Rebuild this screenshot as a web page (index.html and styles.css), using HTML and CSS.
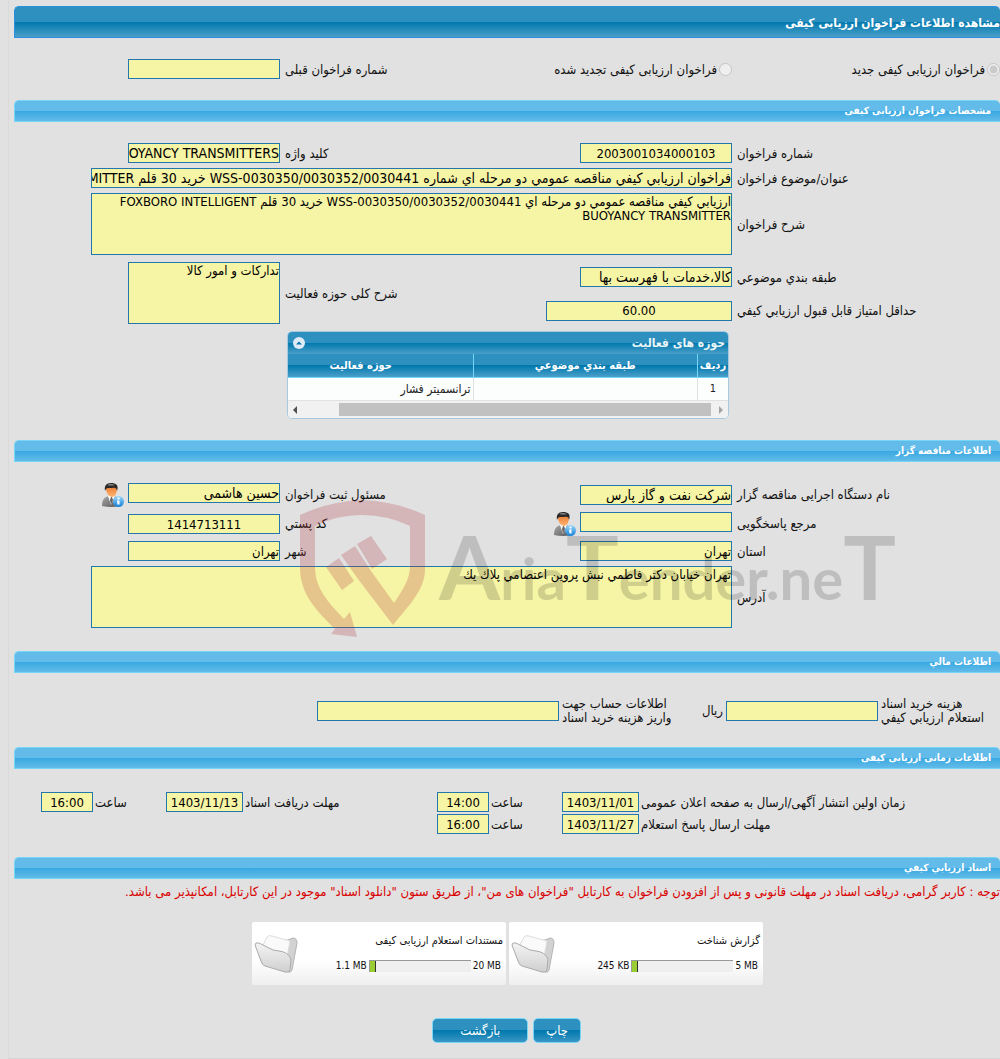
FILE: index.html
```html
<!DOCTYPE html>
<html lang="fa" dir="rtl">
<head>
<meta charset="utf-8">
<meta name="viewport" content="width=device-width, initial-scale=1">
<title>مشاهده اطلاعات فراخوان ارزیابی کیفی</title>
<link rel="stylesheet" href="styles.css">
</head>
<body>
<svg class="sprite" aria-hidden="true">
  <defs>
    <linearGradient id="skin" x1="0" y1="0" x2="0" y2="1"><stop offset="0" stop-color="#e8762a"/><stop offset="1" stop-color="#ffb673"/></linearGradient>
    <linearGradient id="suit" x1="0" y1="0" x2="1" y2="1"><stop offset="0" stop-color="#a9a9a9"/><stop offset="1" stop-color="#555"/></linearGradient>
    <linearGradient id="info" x1="0" y1="0" x2="0" y2="1"><stop offset="0" stop-color="#9ad8fb"/><stop offset="1" stop-color="#1580d8"/></linearGradient>
    <linearGradient id="flap" x1="0" y1="0" x2="0" y2="1"><stop offset="0" stop-color="#f4f4f4"/><stop offset="1" stop-color="#cfcfcf"/></linearGradient>
    <symbol id="user" viewBox="0 0 22 24">
      <path d="M0 23C0 17 2 14 7 13h5c4 1 6 4 6 10Q9 25 0 23z" fill="url(#suit)"/>
      <path d="M6 13l3 9 4-9z" fill="#fff"/>
      <path d="M9 14l-1 3 1 5 2-5-1-3z" fill="#666"/>
      <path d="M4 5c0-3 11-3 11 0 0 5-2 9-5 9S4 10 4 5z" fill="url(#skin)"/>
      <path d="M3 8C2 3 4 0 9 0s8 2 6 8c0-3-2-4-5-3-3 0-6-1-7 3z" fill="#292929"/>
      <path d="M5 2q4-2 8 0-4 1-8 0z" fill="#888"/>
      <circle cx="16.500" cy="18.500" r="5.500" fill="url(#info)"/>
      <path d="M15.500 14.500h2v2h-2zM15 17.500h2.500v4h-2z" fill="#fff"/>
    </symbol>
    <symbol id="folder" viewBox="0 0 44 42">
      <path d="M10 10l24-3 5-2q4 0 4 5l-5 27q-1 3-4 2z" fill="#d2d2d2" stroke="#b5b5b5"/>
      <path d="M9 12l4-8q1-2 5-1l18 5-3 16-5 10z" fill="#fafafa" stroke="#ddd"/>
      <path d="M1 12q0-3 4-2l8 4q6 4 12 4 9 1 12 8l-1 11q-1 3-5 2L11 33q-3-1-4-5z" fill="url(#flap)" stroke="#aaa"/>
    </symbol>
  </defs>
</svg>

<main class="page">
  <h1 class="title">مشاهده اطلاعات فراخوان ارزیابی کیفی</h1>

  <div class="form kind">
    <label class="choice"><input type="radio" name="kind" checked disabled>فراخوان ارزیابی کیفی جدید</label>
    <label class="choice"><input type="radio" name="kind" disabled>فراخوان ارزیابی کیفی تجدید شده</label>
    <label for="prev">شماره فراخوان قبلی</label>
    <input id="prev" class="field" type="text" readonly>
  </div>

  <section>
    <h2 class="bar">مشخصات فراخوان ارزیابی کیفی</h2>
    <div class="form spec">
      <label for="num">شماره فراخوان</label>
      <input id="num" class="field center" type="text" value="2003001034000103" readonly>
      <label for="key">کلید واژه</label>
      <input id="key" class="field" type="text" value="FOXBORO INTELLIGENT BUOYANCY TRANSMITTERS" readonly>

      <label for="subject">عنوان/موضوع فراخوان</label>
      <input id="subject" class="field wide" type="text" value="فراخوان ارزيابي كيفي مناقصه عمومي دو مرحله اي شماره WSS-0030350/0030352/0030441 خريد 30 قلم FOXBORO INTELLIGENT BUOYANCY TRANSMITTER" readonly>

      <label for="desc">شرح فراخوان</label>
      <textarea id="desc" class="field area wide" readonly>ارزيابي كيفي مناقصه عمومي دو مرحله اي WSS-0030350/0030352/0030441 خريد 30 قلم FOXBORO INTELLIGENT BUOYANCY TRANSMITTER</textarea>
    </div>
    <div class="form class">
      <label for="cat">طبقه بندي موضوعي</label>
      <input id="cat" class="field" type="text" value="کالا،خدمات با فهرست بها" readonly>
      <label for="scope" class="tall">شرح کلی حوزه فعالیت</label>
      <textarea id="scope" class="field area tall" readonly>تدارکات و امور کالا</textarea>
      <label for="score">حداقل امتیاز قابل قبول ارزيابي كيفي</label>
      <input id="score" class="field medium center" type="text" value="60.00" readonly>
    </div>

    <div class="grid-box">
      <div class="grid-title">
        <span>حوزه های فعالیت</span>
        <button class="collapse" type="button" aria-label="جمع کردن"><svg viewBox="0 0 12 12"><path d="M3 7.500L6 4.500l3 3z"/></svg></button>
      </div>
      <div class="grid-view">
        <table>
          <colgroup><col class="c-row"><col><col></colgroup>
          <thead><tr><th>رديف</th><th>طبقه بندي موضوعي</th><th>حوزه فعاليت</th></tr></thead>
          <tbody><tr><td class="center">1</td><td></td><td>ترانسميتر فشار</td></tr></tbody>
        </table>
      </div>
      <div class="scroll"><i class="arrow right"></i><i class="thumb"></i><i class="arrow left"></i></div>
    </div>
  </section>

  <section class="owner">
    <h2 class="bar">اطلاعات مناقصه گزار</h2>
    <div class="form org">
      <label for="org">نام دستگاه اجرایی مناقصه گزار</label>
      <input id="org" class="field low" type="text" value="شرکت نفت و گاز پارس" readonly>
      <label for="person">مسئول ثبت فراخوان</label>
      <div class="with-icon high"><input id="person" class="field" type="text" value="حسین هاشمی" readonly><svg class="user"><use href="#user"/></svg></div>

      <label for="ref">مرجع پاسخگویی</label>
      <div class="with-icon high"><input id="ref" class="field" type="text" readonly><svg class="user"><use href="#user"/></svg></div>
      <label for="zip">کد پستي</label>
      <input id="zip" class="field center low" type="text" value="1414713111" readonly>

      <label for="state">استان</label>
      <input id="state" class="field small" type="text" value="تهران" readonly>
      <label for="city">شهر</label>
      <input id="city" class="field small" type="text" value="تهران" readonly>
    </div>
    <div class="form address">
      <label for="addr">آدرس</label>
      <textarea id="addr" class="field area wide" readonly>تهران خيابان دكتر فاطمي نبش پروين اعتصامي پلاك يك</textarea>
    </div>
    <svg class="watermark" viewBox="300 498 604 142" aria-hidden="true">
      <g fill="#b3323a" opacity=".24">
        <path d="M300 515Q330 501 362 500q33 1 63 15v54c0 20-14 34-32 56l-35-46-17-24 14-9 16 25 23 32c8-12 16-24 16-36v-41q-23-11-48-11t-47 11v41c0 22 14 36 29 52l6-7 7 25-26-3 4-5c-18-18-35-34-35-62z"/>
        <path d="M357 544l14-8 16 23-15 10zM326 567l13-9 15 23-12 9z"/>
      </g>
      <text x="439" y="600" direction="ltr"><tspan class="cap">A</tspan>ria<tspan class="cap">T</tspan>ender.ne<tspan class="cap">T</tspan></text>
    </svg>
  </section>

  <section>
    <h2 class="bar">اطلاعات مالي</h2>
    <div class="money">
      <label for="cost">هزینه خرید اسناد<br>استعلام ارزيابي كيفي</label>
      <input id="cost" class="field" type="text" readonly>
      <span>ریال</span>
      <label for="acct">اطلاعات حساب جهت<br>واریز هزینه خرید اسناد</label>
      <input id="acct" class="field" type="text" readonly>
    </div>
  </section>

  <section>
    <h2 class="bar">اطلاعات زمانی ارزیابی کیفی</h2>
    <div class="times">
      <label for="d1">زمان اولین انتشار آگهی/ارسال به صفحه اعلان عمومی</label>
      <input id="d1" class="field center" type="text" value="1403/11/01" readonly>
      <label for="t1">ساعت</label>
      <input id="t1" class="field center" type="text" value="14:00" readonly>
      <label for="d2">مهلت دریافت اسناد</label>
      <input id="d2" class="field center" type="text" value="1403/11/13" readonly>
      <label for="t2">ساعت</label>
      <input id="t2" class="field center" type="text" value="16:00" readonly>
      <label for="d3">مهلت ارسال پاسخ استعلام</label>
      <input id="d3" class="field center" type="text" value="1403/11/27" readonly>
      <label for="t3">ساعت</label>
      <input id="t3" class="field center" type="text" value="16:00" readonly>
    </div>
  </section>

  <section>
    <h2 class="bar">اسناد ارزيابي كيفي</h2>
    <p class="note">توجه : کاربر گرامی، دریافت اسناد در مهلت قانونی و پس از افزودن فراخوان به کارتابل "فراخوان های من"، از طریق ستون "دانلود اسناد" موجود در این کارتابل، امکانپذیر می باشد.</p>
    <div class="cards">
      <article class="card">
        <div class="info">
          <h3>گزارش شناخت</h3>
          <div class="usage"><bdi>5 MB</bdi><div class="meter"><div class="fill" style="width:5%"></div></div><bdi>245 KB</bdi></div>
        </div>
        <svg class="folder"><use href="#folder"/></svg>
      </article>
      <article class="card">
        <div class="info">
          <h3>مستندات استعلام ارزیابی کیفی</h3>
          <div class="usage"><bdi>20 MB</bdi><div class="meter"><div class="fill" style="width:6%"></div></div><bdi>1.1 MB</bdi></div>
        </div>
        <svg class="folder"><use href="#folder"/></svg>
      </article>
    </div>
  </section>

  <div class="actions">
    <button class="btn" type="button">چاپ</button>
    <button class="btn back" type="button">بازگشت</button>
  </div>
</main>
</body>
</html>
```
FILE: styles.css
```css
* { box-sizing: border-box; }

body {
  margin: 0;
  padding-left: 8px;
  background: #e1e1e1;
  color: #111;
  font: 13px/14px Tahoma, "DejaVu Sans Condensed", "DejaVu Sans", sans-serif;
}

h1, h2, h3, p { margin: 0; }

.sprite { position: absolute; width: 0; height: 0; }

.page {
  padding: 6px 0 15px 5px;
  border-left: 1px solid #dadada;
  border-bottom: 1px solid #d4d4d4;
}

.title, .bar {
  color: #fff;
  font-weight: bold;
  border-radius: 5px 5px 0 0;
}
.title {
  height: 32px;
  font-size: 12px;
  line-height: 32px;
  border: 1px solid #2a8fe0;
  border-right: 0;
  background: linear-gradient(#2e90bf 50%, #0078ae 50%, #4a9fc8);
}
.bar {
  height: 22px;
  padding-right: 9px;
  font-size: 10px;
  line-height: 20px;
  border: 1px solid #77d5f7;
  border-right: 0;
  background: linear-gradient(#62bbe8 50%, #38a8e2 50%, #62bbe8);
}

/* Two label and field pairs per row */
.form {
  display: grid;
  grid-template-columns: 263px minmax(0, 1fr) 120px 266px;
  gap: 5px;
  align-items: center;
}
label { text-align: left; padding-top: 1px; }
.kind { padding: 21px 0; }
.spec { padding-top: 21px; }
.class { padding-top: 7px; grid-template-rows: 30px 27px; }
.org { padding-top: 21px; row-gap: 7px; grid-template-rows: 22px 22px 20px; }
.address { padding: 5px 0 23px; }

.choice { display: flex; align-items: center; gap: 2px; }
.choice input { width: 13px; height: 13px; margin: 0; }

.field {
  width: 152px;
  height: 20px;
  margin: 0;
  padding: 0;
  border: 1px solid #2477aa;
  border-radius: 0;
  outline: 0;
  background: #f6f4a5;
  color: #000;
  font: 14px/18px Tahoma, "DejaVu Sans Condensed", "DejaVu Sans", sans-serif;
}
.area {
  display: block;
  height: 62px;
  padding-top: 1px;
  font-size: 13px;
  line-height: 14px;
  resize: none;
  overflow: hidden;
}
.center { text-align: center; font-size: 13px; }
.small { font-size: 13px; }
.medium { width: 186px; }
.wide { grid-column: 2 / 5; width: 641px; }
.tall { grid-row: 1 / 3; }
label.tall { grid-column: 3; }
.area.tall { grid-column: 4; }
.high { align-self: start; }
.low { align-self: end; }

.with-icon { display: flex; align-items: flex-start; gap: 4px; height: 20px; }
.user { width: 22px; height: 24px; flex: none; }

/* Activity list */
.grid-box {
  width: 442px;
  margin: 7px 271px 21px 0;
  border: 1px solid #a6c9e2;
  border-radius: 5px;
  overflow: hidden;
  background: #fcfdfd;
}
.grid-title {
  display: flex;
  align-items: center;
  justify-content: space-between;
  height: 22px;
  padding: 0 3px 0 5px;
  color: #eaf5f7;
  font-weight: bold;
  font-size: 12px;
  background: linear-gradient(#2e90bf 50%, #0078ae 50%, #4a9fc8);
}
.collapse {
  width: 12px;
  height: 12px;
  padding: 0;
  border: 0;
  border-radius: 6px;
  background: #dfeaf6;
}
.collapse svg { display: block; fill: #0078ae; }
.grid-view { overflow: hidden; }
table {
  width: 480px;
  table-layout: fixed;
  border-collapse: separate;
  border-spacing: 0;
}
.c-row { width: 31px; }
th {
  height: 24px;
  padding: 0;
  color: #fff;
  font-size: 11px;
  line-height: 14px;
  border-left: 1px solid #77d5f7;
  border-bottom: 1px solid #77d5f7;
  background: linear-gradient(#2e90bf 50%, #0078ae 50%, #4a9fc8);
}
td {
  height: 23px;
  padding: 0 2px;
  color: #222;
  font-size: 12px;
  line-height: 14px;
  border-left: 1px solid #e1e1e1;
  border-bottom: 1px solid #e1e1e1;
}
td.center { font-size: 11px; }
.scroll {
  display: flex;
  align-items: center;
  gap: 5px;
  height: 17px;
  padding: 0 5px;
  background: #f1f1f1;
}
.arrow { border: 4px solid transparent; }
.arrow.right { border-right: 0; border-left: 4px solid #a3a3a3; margin-left: 3px; }
.arrow.left { border-left: 0; border-right: 4px solid #505050; }
.thumb { flex: 1; height: 13px; margin-left: 37px; background: #c1c1c1; }

.owner { position: relative; }
.watermark {
  position: absolute;
  left: 286px;
  top: 58px;
  width: 604px;
  height: 142px;
  pointer-events: none;
}
.watermark text {
  font: bold 58px Lato, "Liberation Sans", sans-serif;
  fill: #000;
  opacity: .15;
}
.watermark .cap { font-size: 88px; }

.money {
  display: grid;
  grid-template-columns: 119px 152px 48px 110px 242px;
  gap: 3px;
  align-items: center;
  padding: 23px 0 22px;
}
.money label { white-space: nowrap; }
.money .field { width: 100%; }

.times {
  display: grid;
  grid-template-columns: 359px 77px 69px 52px 190px 77px 69px 52px;
  gap: 2px;
  align-items: center;
  padding: 23px 0;
}
.times .field { width: 100%; }

.note {
  padding: 6px 0 23px;
  color: #d90000;
  white-space: nowrap;
}

.cards { display: flex; gap: 3px; padding-right: 237px; }
.card {
  display: flex;
  align-items: center;
  justify-content: space-between;
  width: 254px;
  height: 63px;
  padding: 0 3px 0 2px;
  border-radius: 2px;
  background: linear-gradient(#fff 60%, #efefef);
}
.card h3 { font-size: 11px; font-weight: normal; }
.usage {
  display: flex;
  align-items: center;
  gap: 2px;
  margin-top: 11px;
  padding-right: 2px;
  font-size: 10px;
}
.meter {
  width: 102px;
  height: 12px;
  direction: ltr;
  border-top: 1px solid #999;
  border-left: 1px solid #999;
  background: #efefef;
}
.fill { height: 11px; background: #9acd32; border-right: 1px solid #333; }
.folder { width: 44px; height: 42px; flex: none; }

.actions { display: flex; gap: 5px; padding: 33px 419px 0 0; }
.btn {
  min-width: 47px;
  height: 25px;
  padding: 0 12px;
  border: 1px solid #77d5f7;
  border-radius: 5px;
  background: linear-gradient(#2e90bf 50%, #0078ae 50%, #3a96c4);
  color: #fff;
  font: 13px/20px Tahoma, "DejaVu Sans Condensed", "DejaVu Sans", sans-serif;
}
.back { width: 96px; }
```
